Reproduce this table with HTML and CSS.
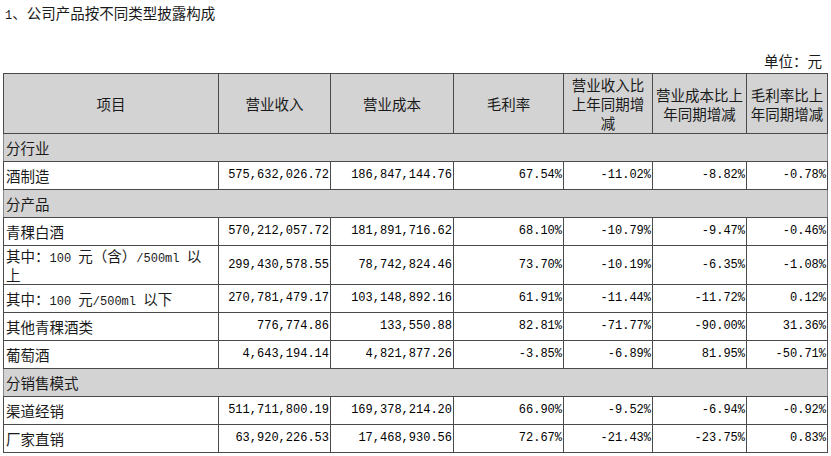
FILE: index.html
```html
<!DOCTYPE html>
<html lang="zh">
<head>
<meta charset="utf-8">
<link rel="stylesheet" href="styles.css">
</head>
<body>
<div class="page">
  <div class="title"><span class="num">1</span>、公司产品按不同类型披露构成</div>
  <div class="unit">单位：元</div>
  <table class="tbl">
    <colgroup>
      <col class="c1"><col class="c2"><col class="c3"><col class="c4"><col class="c5"><col class="c6"><col class="c7">
    </colgroup>
    <tr class="head">
      <th>项目</th>
      <th>营业收入</th>
      <th>营业成本</th>
      <th>毛利率</th>
      <th>营业收入比<br>上年同期增<br>减</th>
      <th>营业成本比上<br>年同期增减</th>
      <th>毛利率比上<br>年同期增减</th>
    </tr>
    <tr class="sec"><td colspan="7">分行业</td></tr>
    <tr><td>酒制造</td><td class="n">575,632,026.72</td><td class="n">186,847,144.76</td><td class="n">67.54%</td><td class="n">-11.02%</td><td class="n">-8.82%</td><td class="n">-0.78%</td></tr>
    <tr class="sec"><td colspan="7">分产品</td></tr>
    <tr><td>青稞白酒</td><td class="n">570,212,057.72</td><td class="n">181,891,716.62</td><td class="n">68.10%</td><td class="n">-10.79%</td><td class="n">-9.47%</td><td class="n">-0.46%</td></tr>
    <tr class="two"><td>其中：<span class="num">100 </span>元（含）<span class="num">/500ml </span>以<br>上</td><td class="n">299,430,578.55</td><td class="n">78,742,824.46</td><td class="n">73.70%</td><td class="n">-10.19%</td><td class="n">-6.35%</td><td class="n">-1.08%</td></tr>
    <tr><td>其中：<span class="num">100 </span>元<span class="num">/500ml </span>以下</td><td class="n">270,781,479.17</td><td class="n">103,148,892.16</td><td class="n">61.91%</td><td class="n">-11.44%</td><td class="n">-11.72%</td><td class="n">0.12%</td></tr>
    <tr><td>其他青稞酒类</td><td class="n">776,774.86</td><td class="n">133,550.88</td><td class="n">82.81%</td><td class="n">-71.77%</td><td class="n">-90.00%</td><td class="n">31.36%</td></tr>
    <tr><td>葡萄酒</td><td class="n">4,643,194.14</td><td class="n">4,821,877.26</td><td class="n">-3.85%</td><td class="n">-6.89%</td><td class="n">81.95%</td><td class="n">-50.71%</td></tr>
    <tr class="sec"><td colspan="7">分销售模式</td></tr>
    <tr><td>渠道经销</td><td class="n">511,711,800.19</td><td class="n">169,378,214.20</td><td class="n">66.90%</td><td class="n">-9.52%</td><td class="n">-6.94%</td><td class="n">-0.92%</td></tr>
    <tr><td>厂家直销</td><td class="n">63,920,226.53</td><td class="n">17,468,930.56</td><td class="n">72.67%</td><td class="n">-21.43%</td><td class="n">-23.75%</td><td class="n">0.83%</td></tr>
  </table>
</div>
</body>
</html>
```

FILE: styles.css
```css
html, body {
  margin: 0;
  padding: 0;
  background: #ffffff;
}
body {
  font-family: "Noto Sans CJK SC", "Liberation Serif", serif;
  font-size: 14.5px;
  line-height: 19px;
  color: #1a1a1a;
}
.page {
  padding: 3px 0 0 3px;
  width: 824px;
}
.title {
  padding-left: 2px;
  height: 19px;
}
.unit {
  margin-top: 29px;
  text-align: right;
  padding-right: 5px;
  height: 22px;
}
.num {
  font-family: "Liberation Mono", monospace;
  font-size: 12px;
  line-height: 1;
}
.tbl {
  border-collapse: collapse;
  table-layout: fixed;
  width: 824px;
  border: 1px solid #8a8a8a;
}
.c1 { width: 215px; }
.c2 { width: 112px; }
.c3 { width: 123px; }
.c4 { width: 110px; }
.c5 { width: 89px; }
.c6 { width: 94px; }
.c7 { width: 81px; }
.tbl th, .tbl td {
  border: 1px solid #4a4a4a;
  padding: 0 1px 0 2px;
  height: 27px;
  vertical-align: middle;
  white-space: nowrap;
  overflow: hidden;
}
.tbl th {
  background: #d3d3d3;
  font-weight: normal;
  text-align: center;
  height: 59px;
  padding: 0;
}
.tbl tr.sec td {
  background: #d3d3d3;
  border-left-color: #8a8a8a;
  border-right-color: #8a8a8a;
}
.tbl tr.two td {
  height: 37px;
  white-space: normal;
}
.tbl td.n {
  text-align: right;
  font-family: "Liberation Mono", monospace;
  font-size: 12px;
  color: #000;
  padding-right: 1px;
}
```
